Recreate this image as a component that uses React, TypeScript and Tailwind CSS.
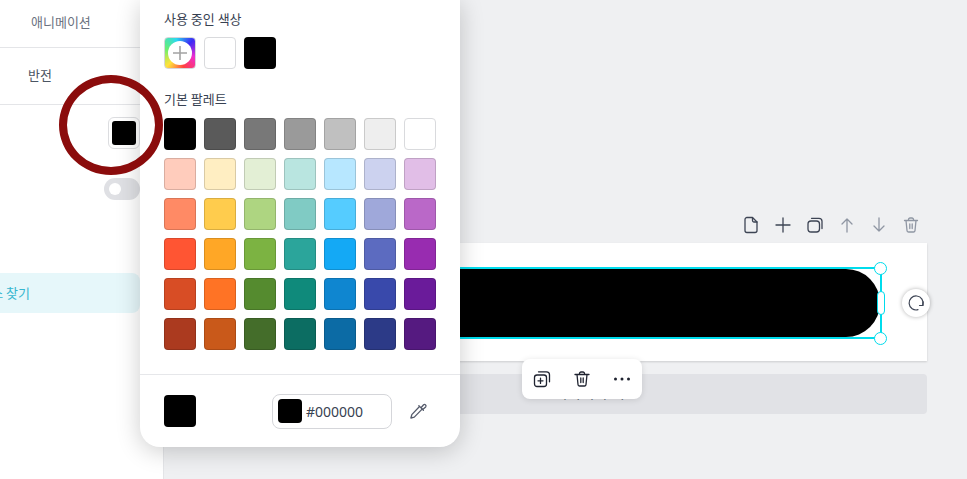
import React from "react";

const FONT = "font-['Noto_Sans_CJK_KR','Noto_Sans',sans-serif]";

const palette = [
  ["#000000", "#5a5a5a", "#787878", "#9a9a9a", "#c0c0c0", "#eeeeee", "#ffffff"],
  ["#ffccbc", "#ffeec2", "#e3efd5", "#b9e5e0", "#b7e7ff", "#ccd2ef", "#e1bee7"],
  ["#ff8a65", "#ffcc4d", "#aed581", "#80cbc4", "#55ccff", "#9fa8da", "#ba68c8"],
  ["#ff5533", "#ffa726", "#7cb342", "#2ba59b", "#14a9f5", "#5c6bc0", "#982cb0"],
  ["#d84d25", "#ff7325", "#558b2f", "#0f8a7b", "#0f86d0", "#3949ab", "#6a1b9a"],
  ["#ab3a1f", "#c9591a", "#446d2a", "#0c6d62", "#0c6ba5", "#2c3a87", "#551a80"],
];

function Swatch({ color }: { color: string }) {
  const light = color === "#ffffff";
  return (
    <div
      className={`w-8 h-8 rounded-[4px] border ${light ? "border-[#d9dadd]" : "border-black/15"}`}
      style={{ backgroundColor: color }}
    />
  );
}

function Icon({ children, color = "#3d4454" }: { children: React.ReactNode; color?: string }) {
  return (
    <svg width="20" height="20" viewBox="0 0 20 20" fill="none" stroke={color} strokeWidth="1.3" strokeLinecap="round" strokeLinejoin="round">
      {children}
    </svg>
  );
}

function LeftPanel() {
  return (
    <aside className="w-[164px] shrink-0 bg-white border-r border-[#e4e5e8] overflow-hidden">
      <div className="w-[140px]">
        <div className="h-[48px] border-b border-[#e4e5e8] pl-[31px] pt-[13px] text-[13px] leading-[18px] text-[#6b7280] whitespace-nowrap">애니메이션</div>
        <div className="h-[57px] border-b border-[#e4e5e8] pl-[28px] pt-[18px] text-[13px] leading-[18px] text-[#4b5563]">반전</div>
        <div className="flex justify-end pt-[12px]">
          <div className="w-8 h-8 rounded-[6px] border border-[#dcdde0] bg-white flex items-center justify-center">
            <div className="w-6 h-6 rounded-[3px] bg-black" />
          </div>
        </div>
        <div className="flex justify-end mt-[29px]">
          <div className="w-9 h-[22px] rounded-full bg-[#dfe0e4] flex items-center pl-[5px]">
            <div className="w-3 h-3 rounded-full bg-white" />
          </div>
        </div>
        <div className="mt-[73px] h-10 rounded-r-lg bg-[#e6f7fa] flex items-center justify-end pr-[110px] text-[13px] text-[#35b6cf] whitespace-nowrap">
          이 요소 찾기
        </div>
      </div>
    </aside>
  );
}

function ColorPopover() {
  return (
    <div className="absolute left-[140px] top-0 w-[320px] h-[447px] bg-white rounded-b-[20px] shadow-[0_4px_24px_rgba(0,0,0,0.2)] flex flex-col">
      <div className="px-6 h-[375px] shrink-0 border-b border-[#e6e7ea]">
        <div className="pt-[10px] h-[37px] text-[13px] leading-[18px] text-[#374151]">사용 중인 색상</div>
        <div className="flex gap-2">
          <div className="w-8 h-8 rounded-[4px] border border-[#d5d6da] flex items-center justify-center bg-[conic-gradient(from_45deg,#3b2bf5,#f02bd0,#ff4040,#ffe23b,#6cf06c,#2bd9f0,#3b2bf5)]">
            <div className="w-6 h-6 rounded-full bg-white flex items-center justify-center">
              <svg width="16" height="16" viewBox="0 0 16 16" stroke="#a3a3a3" strokeWidth="1.6"><path d="M8 1v14M1 8h14" /></svg>
            </div>
          </div>
          <Swatch color="#ffffff" />
          <Swatch color="#000000" />
        </div>
        <div className="mt-[20px] pt-[1px] h-[29px] text-[13px] leading-[18px] text-[#374151]">기본 팔레트</div>
        <div className="grid grid-cols-[repeat(7,32px)] gap-2">
          {palette.flat().map((c, i) => (
            <Swatch key={i} color={c} />
          ))}
        </div>
      </div>
      <div className="flex items-center px-6 flex-1">
        <Swatch color="#000000" />
        <div className="ml-[76px] w-[120px] h-[35px] rounded-lg border border-[#d5d6da] flex items-center pl-[5px] gap-[4px]">
          <div className="w-6 h-6 rounded-[4px] bg-black" />
          <span className="text-[14px] text-[#374151] font-['Noto_Sans',sans-serif]">#000000</span>
        </div>
        <div className="ml-[16px]">
          <Icon color="#555b6b">
            <path d="M11.5 5.5 3.8 13.6l-.9 3.4 3.4-.9 7.8-8" />
            <path d="M10.800 4.600l4.600 4.600M13 6.800l2.600-3a1.500 1.500 0 0 1 2.100 2.100l-3 2.700" />
          </Icon>
        </div>
      </div>
    </div>
  );
}

function Canvas() {
  const gray = "#8f96a3";
  return (
    <main className="flex-1 min-w-0 bg-[#eff0f2] pl-[40px] pr-[40px] pt-[209px]">
      <div className="flex justify-end h-8 mb-[2px]">
        <button className="w-8 h-8 flex items-center justify-center">
          <Icon><path d="M4 4.500A2 2 0 0 1 6 2.500h5.500L16 7v8.500a2 2 0 0 1-2 2H6a2 2 0 0 1-2-2z" /><path d="M11.500 2.700V5.500a1.500 1.500 0 0 0 1.500 1.500h3" /></Icon>
        </button>
        <button className="w-8 h-8 flex items-center justify-center">
          <Icon><path d="M10 3v14M3 10h14" /></Icon>
        </button>
        <button className="w-8 h-8 flex items-center justify-center">
          <Icon><rect x="3" y="6" width="11.500" height="11" rx="3" /><path d="M6.500 3.300h7.500a3 3 0 0 1 3 3v7.200" /></Icon>
        </button>
        <button className="w-8 h-8 flex items-center justify-center">
          <Icon color={gray}><path d="M10 17V4M5 9l5-5 5 5" /></Icon>
        </button>
        <button className="w-8 h-8 flex items-center justify-center">
          <Icon color={gray}><path d="M10 3v13M5 11l5 5 5-5" /></Icon>
        </button>
        <button className="w-8 h-8 flex items-center justify-center">
          <Icon color={gray}><path d="M3.500 5.500h13M7.500 5.500V4.500a1.500 1.500 0 0 1 1.500-1.500h2a1.500 1.500 0 0 1 1.500 1.500v1M5 5.500 6 15.500A1.500 1.500 0 0 0 7.500 17h5a1.500 1.500 0 0 0 1.500-1.500l1-10M8.800 9v4.500M11.200 9v4.500" /></Icon>
        </button>
      </div>

      <div className="relative h-[118px] bg-white shadow-[0_1px_2px_rgba(0,0,0,0.15)]">
        <div className="absolute left-[180px] right-[45px] top-[24px] h-[72px] border-2 border-[#00dcec]">
          <div className="h-full bg-black rounded-r-[34px]" />
        </div>
        <div className="absolute right-[40px] top-[18.500px] w-[13px] h-[13px] rounded-full bg-white border-[1.500px] border-[#00dcec]" />
        <div className="absolute right-[40px] top-[88.500px] w-[13px] h-[13px] rounded-full bg-white border-[1.500px] border-[#00dcec]" />
        <div className="absolute right-[42.500px] top-[48px] w-2 h-6 rounded-full bg-white border-[1.500px] border-[#00dcec]" />
        <div className="absolute right-[-3px] top-[46px] w-7 h-7 rounded-full bg-white shadow-[0_0_4px_rgba(0,0,0,0.3)] flex items-center justify-center">
          <svg width="18" height="18" viewBox="0 0 18 18" fill="none" stroke="#3d4454" strokeWidth="1.200" strokeLinecap="round" strokeLinejoin="round">
            <path d="M15.800 11A7 7 0 1 0 11 15.700" />
            <path d="M16 7.800V11.500H12.500" />
          </svg>
        </div>
      </div>

      <div className="relative mt-[13px] h-10 rounded bg-[#e1e2e6] flex items-center justify-center pl-[36px] pb-[4px] text-[15px] text-[#4b5563]">
        + 페이지 추가
      </div>

      <div className="absolute left-[522px] top-[359px] w-[120px] h-10 rounded-lg bg-white shadow-[0_1px_6px_rgba(0,0,0,0.12)] flex items-center justify-around">
        <Icon color="#1f2330">
          <rect x="2.500" y="6" width="12" height="11.500" rx="2.500" />
          <path d="M6.500 2.800h8a3 3 0 0 1 3 3v7M8.500 9.200v5.200M6 11.800h5" />
        </Icon>
        <Icon color="#1f2330">
          <path d="M3 5.500h14M7.500 5.500V4.500a1.500 1.500 0 0 1 1.500-1.500h2a1.500 1.500 0 0 1 1.500 1.500v1M5 5.500 6 15.500A1.500 1.500 0 0 0 7.500 17h5a1.500 1.500 0 0 0 1.500-1.500l1-10M8.800 9v4.500M11.200 9v4.500" />
        </Icon>
        <svg width="20" height="20" viewBox="0 0 20 20" fill="#1f2330">
          <circle cx="3.500" cy="10" r="1.500" />
          <circle cx="10" cy="10" r="1.500" />
          <circle cx="16.500" cy="10" r="1.500" />
        </svg>
      </div>
    </main>
  );
}

export default function App() {
  return (
    <div className={`relative flex w-[967px] h-[479px] overflow-hidden ${FONT}`}>
      <LeftPanel />
      <Canvas />
      <ColorPopover />
      <div className="absolute left-[59px] top-[75px] w-[104px] h-[100px] rounded-[50%] border-[8px] border-[#8b0c0c]" />
    </div>
  );
}
